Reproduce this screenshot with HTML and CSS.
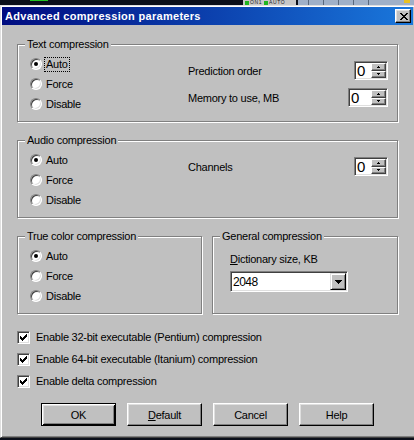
FILE: index.html
```html
<!DOCTYPE html>
<html>
<head>
<meta charset="utf-8">
<link rel="stylesheet" href="styles.css">
</head>
<body>
<div class="strip">
  <span class="s-green"></span>
  <span class="s-box">
    <span class="s-led"></span><span class="s-txt">ON1</span>
    <span class="s-led"></span><span class="s-txt">AUTO</span>
  </span>
  <span class="s-bar"><span class="s-seg"></span><span class="s-seg"></span><span class="s-seg"></span><span class="s-seg"></span><span class="s-seg"></span><span class="s-yel"></span></span>
</div>
<div class="dialog">
  <div class="titlebar">
    <span class="title">Advanced compression parameters</span>
    <span class="close"><svg width="8" height="7" viewBox="0 0 8 7"><path d="M0 0h2v1H0zM6 0h2v1H6zM1 1h2v1H1zM5 1h2v1H5zM2 2h4v1H2zM3 3h2v1H3zM2 4h4v1H2zM1 5h2v1H1zM5 5h2v1H5zM0 6h2v1H0zM6 6h2v1H6z" fill="#000"/></svg></span>
  </div>
  <div class="content">
    <div class="group">
      <span class="legend">Text compression</span>
      <div class="radios">
        <div class="radio-row"><span class="radio on"></span><span class="rlabel focus">Auto</span></div>
        <div class="radio-row"><span class="radio"></span><span class="rlabel">Force</span></div>
        <div class="radio-row"><span class="radio"></span><span class="rlabel">Disable</span></div>
      </div>
      <div class="fields">
        <div class="field"><span>Prediction order</span>
          <div class="spin w34"><span class="val">0</span><span class="spinbtns"><span class="sb"><svg width="3" height="2" viewBox="0 0 3 2"><path d="M1 0h1v1H1zM0 1h3v1H0z"/></svg></span><span class="sb"><svg width="3" height="2" viewBox="0 0 3 2"><path d="M0 0h3v1H0zM1 1h1v1H1z"/></svg></span></span></div>
        </div>
        <div class="field"><span>Memory to use, MB</span>
          <div class="spin w40"><span class="val">0</span><span class="spinbtns"><span class="sb"><svg width="3" height="2" viewBox="0 0 3 2"><path d="M1 0h1v1H1zM0 1h3v1H0z"/></svg></span><span class="sb"><svg width="3" height="2" viewBox="0 0 3 2"><path d="M0 0h3v1H0zM1 1h1v1H1z"/></svg></span></span></div>
        </div>
      </div>
    </div>

    <div class="group gap">
      <span class="legend">Audio compression</span>
      <div class="radios">
        <div class="radio-row"><span class="radio on"></span><span class="rlabel">Auto</span></div>
        <div class="radio-row"><span class="radio"></span><span class="rlabel">Force</span></div>
        <div class="radio-row"><span class="radio"></span><span class="rlabel">Disable</span></div>
      </div>
      <div class="fields">
        <div class="field"><span>Channels</span>
          <div class="spin w34"><span class="val">0</span><span class="spinbtns"><span class="sb"><svg width="3" height="2" viewBox="0 0 3 2"><path d="M1 0h1v1H1zM0 1h3v1H0z"/></svg></span><span class="sb"><svg width="3" height="2" viewBox="0 0 3 2"><path d="M0 0h3v1H0zM1 1h1v1H1z"/></svg></span></span></div>
        </div>
      </div>
    </div>

    <div class="pair gap">
      <div class="group truecolor">
        <span class="legend">True color compression</span>
        <div class="radios">
          <div class="radio-row"><span class="radio on"></span><span class="rlabel">Auto</span></div>
          <div class="radio-row"><span class="radio"></span><span class="rlabel">Force</span></div>
          <div class="radio-row"><span class="radio"></span><span class="rlabel">Disable</span></div>
        </div>
      </div>
      <div class="group general">
        <span class="legend">General compression</span>
        <div class="gen-inner">
          <div class="dlabel"><u>D</u>ictionary size, KB</div>
          <div class="combo"><span class="cval">2048</span><span class="cbtn"><svg width="7" height="4" viewBox="0 0 7 4"><path d="M0 0h7v1H0zM1 1h5v1H1zM2 2h3v1H2zM3 3h1v1H3z"/></svg></span></div>
        </div>
      </div>
    </div>

    <div class="checks">
      <div class="check-row"><span class="cb"><svg width="7" height="7" viewBox="0 0 7 7"><path d="M6 0h1v1H6zM5 1h2v1H5zM0 2h1v1H0zM4 2h3v1H4zM0 3h2v1H0zM3 3h3v1H3zM0 4h5v1H0zM1 5h3v1H1zM2 6h1v1H2z"/></svg></span><span class="clabel">Enable 32-bit executable (Pentium) compression</span></div>
      <div class="check-row"><span class="cb"><svg width="7" height="7" viewBox="0 0 7 7"><path d="M6 0h1v1H6zM5 1h2v1H5zM0 2h1v1H0zM4 2h3v1H4zM0 3h2v1H0zM3 3h3v1H3zM0 4h5v1H0zM1 5h3v1H1zM2 6h1v1H2z"/></svg></span><span class="clabel">Enable 64-bit executable (Itanium) compression</span></div>
      <div class="check-row"><span class="cb"><svg width="7" height="7" viewBox="0 0 7 7"><path d="M6 0h1v1H6zM5 1h2v1H5zM0 2h1v1H0zM4 2h3v1H4zM0 3h2v1H0zM3 3h3v1H3zM0 4h5v1H0zM1 5h3v1H1zM2 6h1v1H2z"/></svg></span><span class="clabel">Enable delta compression</span></div>
    </div>

    <div class="buttons">
      <button class="btn default">OK</button>
      <button class="btn"><u>D</u>efault</button>
      <button class="btn">Cancel</button>
      <button class="btn">Help</button>
    </div>
  </div>
</div>
</body>
</html>
```

FILE: styles.css
```css
* { box-sizing: border-box; }

body {
  margin: 0;
  width: 414px;
  height: 440px;
  overflow: hidden;
  background: #0b0f1a;
  font-family: "Liberation Sans", Arial, sans-serif;
  font-size: 11px;
  letter-spacing: -0.25px;
  color: #000;
}

/* cropped desktop strip above the dialog */
.strip {
  height: 5px;
  display: flex;
  align-items: flex-start;
}
.s-green { margin-left: 30px; width: 18px; height: 1px; background: #22c322; }
.s-box {
  margin-left: 195px;
  width: 53px;
  height: 5px;
  background: #c8c8c8;
  display: flex;
  align-items: center;
}
.s-led { width: 4px; height: 4px; background: #1fb51f; margin-left: 2px; margin-right: 1px; }
.s-txt { font-size: 5px; line-height: 5px; letter-spacing: 0.6px; color: #222; }
.s-bar {
  margin-left: 2px;
  flex: 1;
  height: 5px;
  background: #9fb0c8;
  display: flex;
  gap: 14px;
  padding-left: 10px;
}
.s-seg { width: 1px; height: 5px; background: #59687c; }
.s-yel { margin-left: auto; margin-right: 4px; width: 6px; height: 3px; background: #e8c020; }

.dialog {
  background: #c0c0c0;
  border-top: 1px solid #dfdfdf;
  border-left: 1px solid #dfdfdf;
  border-bottom: 1px solid #404040;
  padding: 1px 0 0 1px;
  box-shadow: inset 1px 1px 0 #fff, inset 0 -1px 0 #808080;
}

.titlebar {
  height: 18px;
  margin-right: 1px;
  display: flex;
  align-items: center;
  padding-left: 3px;
  background: linear-gradient(to right, #000c80 0%, #0a3aa8 45%, #1a78dc 100%);
}
.title {
  color: #fff;
  font-weight: bold;
  font-size: 11px;
  letter-spacing: 0.3px;
}
.close {
  margin-left: auto;
  margin-right: 2px;
  width: 16px;
  height: 14px;
  background: #c0c0c0;
  border: 1px solid;
  border-color: #fff #000 #000 #fff;
  box-shadow: inset -1px -1px 0 #808080, inset 1px 1px 0 #dfdfdf;
  display: flex;
  align-items: center;
  justify-content: center;
  padding-left: 1px;
}
.close svg { display: block; }

.content {
  padding: 19px 16px 11px 15px;
}

.group {
  position: relative;
  height: 78px;
  display: flex;
  border: 1px solid #808080;
  box-shadow: 1px 1px 0 #fff, inset 1px 1px 0 #fff;
}
.gap { margin-top: 18px; }

.legend {
  position: absolute;
  top: -7px;
  left: 7px;
  padding: 0 2px;
  background: #c0c0c0;
  line-height: 13px;
  white-space: nowrap;
}

.radios {
  width: 170px;
  padding: 9px 0 0 12px;
}
.radio-row {
  height: 20px;
  display: flex;
  align-items: center;
}
.radio {
  position: relative;
  width: 12px;
  height: 12px;
  border-radius: 50%;
  background: #fff;
  border: 1px solid;
  border-color: #808080 #fff #fff #808080;
  box-shadow: inset 1px 1px 0 #404040, inset -1px -1px 0 #dfdfdf;
  flex: none;
}
.radio.on::after {
  content: "";
  position: absolute;
  left: 3px;
  top: 3px;
  width: 4px;
  height: 4px;
  border-radius: 50%;
  background: #000;
}
.rlabel {
  margin-left: 2px;
  padding: 0 1px;
  border: 1px dotted transparent;
  line-height: 13px;
}
.rlabel.focus { border-color: #000; }

.fields {
  flex: 1;
  padding: 16px 9px 0 0;
  display: flex;
  flex-direction: column;
  gap: 8px;
}
.field {
  height: 19px;
  display: flex;
  align-items: center;
  justify-content: space-between;
}

.spin {
  height: 19px;
  display: flex;
  background: #fff;
  border: 1px solid;
  border-color: #808080 #fff #fff #808080;
  box-shadow: inset 1px 1px 0 #404040, inset -1px -1px 0 #dfdfdf;
  padding: 1px;
}
.w34 { width: 34px; }
.w40 { width: 40px; }
.val {
  padding-left: 1px;
  font-family: "Liberation Sans Narrow", "Liberation Sans", Arial, sans-serif;
  font-size: 15px;
  line-height: 15px;
  letter-spacing: 0;
}
.spinbtns {
  margin-left: auto;
  width: 15px;
  display: flex;
  flex-direction: column;
}
.sb {
  flex: 1;
  background: #c0c0c0;
  border: 1px solid;
  border-color: #fff #404040 #404040 #fff;
  box-shadow: inset -1px -1px 0 #808080;
  display: flex;
  align-items: center;
  justify-content: center;
}
.sb svg { display: block; fill: #000; }

.pair {
  display: flex;
  gap: 10px;
}
.truecolor { width: 185px; }
.general { flex: 1; }
.gen-inner {
  padding: 16px 0 0 17px;
}
.dlabel {
  line-height: 13px;
  margin-bottom: 5px;
}
.combo {
  width: 118px;
  height: 21px;
  display: flex;
  align-items: center;
  background: #fff;
  border: 1px solid;
  border-color: #808080 #fff #fff #808080;
  box-shadow: inset 1px 1px 0 #404040, inset -1px -1px 0 #dfdfdf;
  padding: 1px;
}
.cval {
  font-size: 12px;
  letter-spacing: -0.5px;
  padding-left: 1px;
}
.cbtn {
  margin-left: auto;
  width: 16px;
  height: 17px;
  background: #c0c0c0;
  border: 1px solid;
  border-color: #dfdfdf #000 #000 #dfdfdf;
  box-shadow: inset 1px 1px 0 #fff, inset -1px -1px 0 #808080;
  display: flex;
  align-items: center;
  justify-content: center;
}
.cbtn svg { display: block; fill: #000; }

.checks { margin-top: 12px; }
.check-row {
  height: 22px;
  display: flex;
  align-items: center;
}
.cb {
  width: 13px;
  height: 13px;
  flex: none;
  background: #fff;
  border: 1px solid;
  border-color: #808080 #fff #fff #808080;
  box-shadow: inset 1px 1px 0 #404040, inset -1px -1px 0 #dfdfdf;
  display: flex;
  align-items: center;
  justify-content: center;
}
.cb svg { display: block; fill: #000; }
.clabel { margin-left: 6px; line-height: 13px; }

.buttons {
  margin-top: 11px;
  display: flex;
  gap: 11px;
  padding-left: 24px;
}
.btn {
  width: 75px;
  height: 23px;
  margin: 0;
  padding: 0;
  background: #c0c0c0;
  font: inherit;
  letter-spacing: inherit;
  color: #000;
  border: 1px solid;
  border-color: #fff #000 #000 #fff;
  box-shadow: inset -1px -1px 0 #808080, inset 1px 1px 0 #dfdfdf;
  border-radius: 0;
}
.btn.default {
  border-color: #000;
  box-shadow: inset 1px 1px 0 #fff, inset -1px -1px 0 #000, inset 2px 2px 0 #dfdfdf, inset -2px -2px 0 #808080;
}
```
